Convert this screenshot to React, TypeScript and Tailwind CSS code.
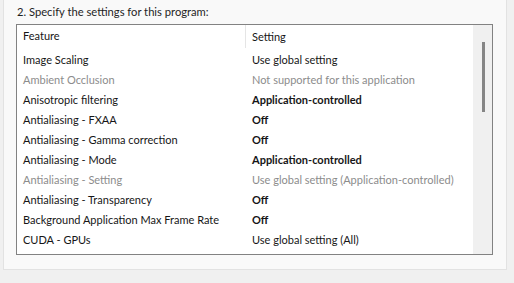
type Row = {
  feature: string
  value: string
  dim?: boolean
  bold?: boolean
}

const rows: Row[] = [
  { feature: 'Image Scaling', value: 'Use global setting' },
  { feature: 'Ambient Occlusion', value: 'Not supported for this application', dim: true },
  { feature: 'Anisotropic filtering', value: 'Application-controlled', bold: true },
  { feature: 'Antialiasing - FXAA', value: 'Off', bold: true },
  { feature: 'Antialiasing - Gamma correction', value: 'Off', bold: true },
  { feature: 'Antialiasing - Mode', value: 'Application-controlled', bold: true },
  { feature: 'Antialiasing - Setting', value: 'Use global setting (Application-controlled)', dim: true },
  { feature: 'Antialiasing - Transparency', value: 'Off', bold: true },
  { feature: 'Background Application Max Frame Rate', value: 'Off', bold: true },
  { feature: 'CUDA - GPUs', value: 'Use global setting (All)' },
]

const App = () => {
  return (
    <div
      className="h-[283px] w-[514px] overflow-hidden whitespace-nowrap bg-[#f0f0f0] text-[11px] text-[#161616]"
      style={{ fontFamily: 'Lato, "Noto Sans", sans-serif' }}
    >
      <div className="ml-[3px] h-[270px] w-[504px] border-x border-b border-[#e2e2e2] bg-[#f9f9f9] pl-[12px]">
        <p className="pt-[4px] pl-[1px] text-[11.2px] leading-[16px] text-[#1f1f1f]">
          2. Specify the settings for this program:
        </p>
        <div className="mt-[4px] flex h-[231px] w-[477px] border border-[#828282] bg-white">
          <div className="flex-1">
            <div className="flex h-[23px] items-center">
              <span className="w-[228px] pl-[6px]">Feature</span>
              <span className="h-full border-l border-[#e5e5e5] pl-[6px] leading-[23px]">
                Setting
              </span>
            </div>
            <div className="mt-[2px] flex flex-col">
              {rows.map((row) => (
                <div
                  key={row.feature}
                  className={`flex h-[20px] items-center ${row.dim ? 'text-[#8c8c8c]' : ''}`}
                >
                  <span className="w-[228px] pl-[6px]">{row.feature}</span>
                  <span className={`pl-[7px] ${row.bold ? 'font-bold' : ''}`}>
                    {row.value}
                  </span>
                </div>
              ))}
            </div>
          </div>
          <div className="flex w-[19px] justify-center border-l border-[#f0f0f0] bg-[#f0f0f0]">
            <div className="mt-[17px] h-[70px] w-[3px] bg-[#858585]" />
          </div>
        </div>
      </div>
    </div>
  )
}

export default App
